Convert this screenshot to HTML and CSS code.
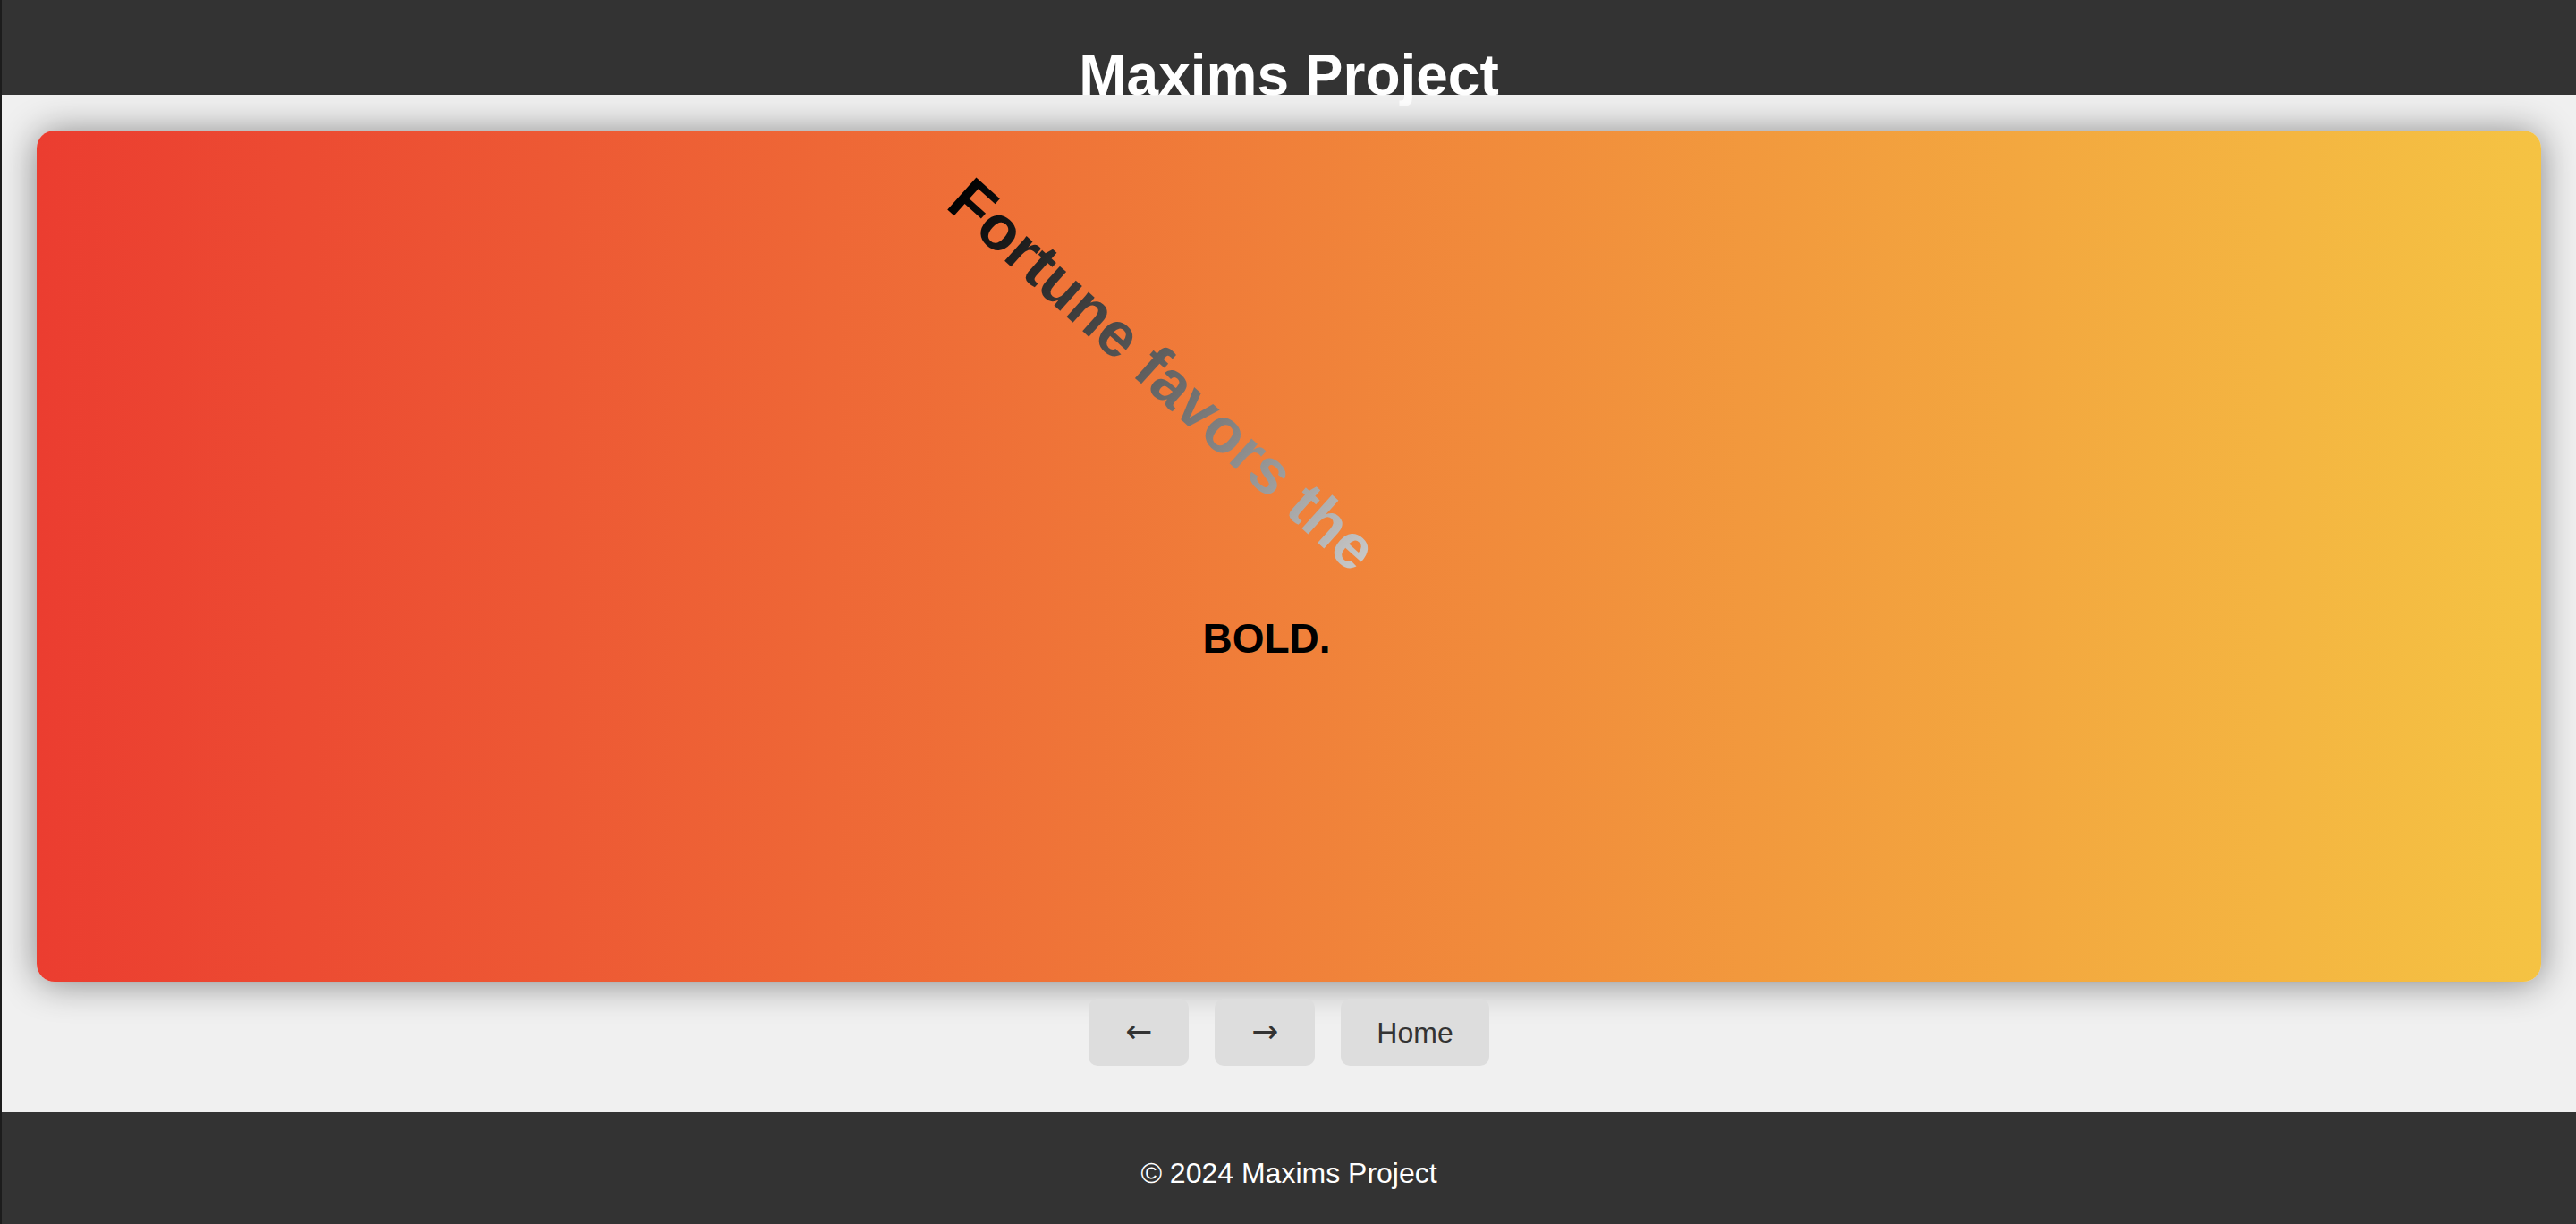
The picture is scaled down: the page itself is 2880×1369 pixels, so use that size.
FILE: index.html
```html
<!DOCTYPE html>
<html lang="en">
<head>
<meta charset="utf-8">
<title>Maxims Project</title>
<link rel="stylesheet" href="styles.css">
</head>
<body>
<header class="site-header">
  <h1 class="site-title">Maxims Project</h1>
</header>
<main class="main">
  <section class="card">
    <div class="maxim-rot">Fortune favors the</div>
    <div class="maxim-bold">BOLD.</div>
  </section>
  <nav class="nav">
    <button class="btn" type="button"><span class="arrow">&larr;</span></button>
    <button class="btn" type="button"><span class="arrow">&rarr;</span></button>
    <button class="btn" type="button">Home</button>
  </nav>
</main>
<footer class="site-footer">
  <p class="footer-text">&copy; 2024 Maxims Project</p>
</footer>
</body>
</html>
```

FILE: styles.css
```css
html, body {
  margin: 0;
  padding: 0;
}

body {
  font-family: "Liberation Sans", Arial, sans-serif;
  background: #f0f0f0;
  border-left: 2px solid #1c1c1c;
  min-height: 1369px;
  box-sizing: border-box;
  display: flex;
  flex-direction: column;
}

.site-header {
  height: 106px;
  background: #333333;
  color: #ffffff;
  text-align: center;
  flex: none;
}

.site-title {
  margin: 0;
  padding-top: 47px;
  font-size: 64px;
  font-weight: bold;
  line-height: normal;
}

.main {
  flex: 1;
  display: flex;
  flex-direction: column;
  align-items: center;
}

.card {
  width: 2800px;
  height: 952px;
  margin-top: 40px;
  box-sizing: border-box;
  padding-top: 233px;
  border-radius: 20px;
  background: linear-gradient(to right, #eb3d30, #f5c343);
  box-shadow: 0 2px 40px rgba(0, 0, 0, 0.45);
  display: flex;
  flex-direction: column;
  align-items: center;
}

.maxim-rot {
  font-size: 70px;
  font-weight: bold;
  line-height: normal;
  white-space: nowrap;
  background: linear-gradient(to right, #000000, #c8c8c8);
  -webkit-background-clip: text;
  background-clip: text;
  color: transparent;
  transform: translateX(-141px) rotate(42deg);
}

.maxim-bold {
  font-size: 46px;
  font-weight: bold;
  line-height: normal;
  color: #000000;
  margin-top: 228px;
  margin-right: 50px;
}

.nav {
  display: flex;
  gap: 29px;
  margin-top: 19px;
}

.btn {
  font-family: "Liberation Sans", Arial, sans-serif;
  font-size: 32px;
  line-height: 34px;
  padding: 20px 40px;
  background: #dddddd;
  color: #333333;
  border: none;
  border-radius: 10px;
  cursor: pointer;
}

.arrow {
  display: inline-block;
  width: 32px;
  text-align: center;
  font-family: "DejaVu Sans", sans-serif;
  font-size: 36px;
  line-height: 34px;
}

.site-footer {
  height: 125px;
  box-sizing: border-box;
  padding-top: 50px;
  background: #333333;
  color: #ffffff;
  text-align: center;
  flex: none;
}

.footer-text {
  margin: 0;
  font-size: 32px;
  line-height: normal;
}
```
